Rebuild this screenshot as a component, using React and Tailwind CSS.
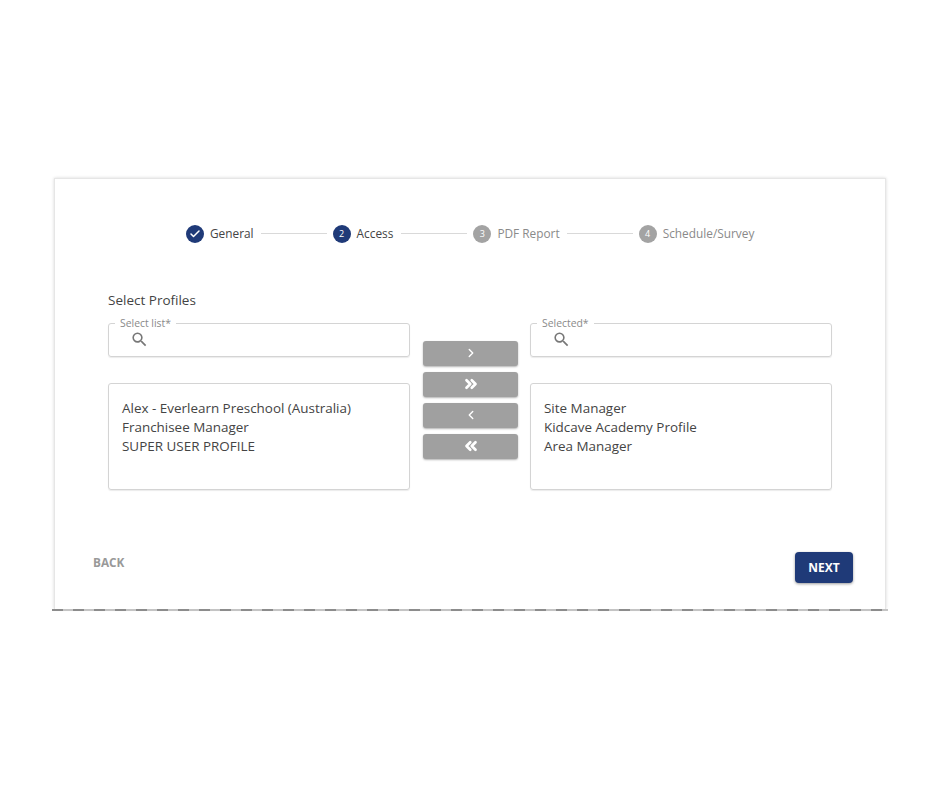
import React from "react";
import { Check, ChevronRight, ChevronLeft, ChevronsRight, ChevronsLeft } from "lucide-react";

const font = { fontFamily: '"Open Sans", sans-serif' };

function SearchIcon() {
  return (
    <svg width="19" height="19" viewBox="0 0 24 24" fill="#777777">
      <path d="M15.5 14h-.79l-.28-.27A6.47 6.47 0 0 0 16 9.5 6.5 6.5 0 1 0 9.5 16c1.61 0 3.09-.59 4.23-1.57l.27.28v.79l5 4.99L20.49 19l-4.99-5zm-6 0C7.01 14 5 11.99 5 9.5S7.01 5 9.5 5 14 7.01 14 9.5 11.99 14 9.5 14z" />
    </svg>
  );
}

function Step({ mark, label, active }) {
  return (
    <div className="flex items-center gap-[6px]">
      <div className={"w-[18px] h-[18px] rounded-full flex items-center justify-center text-white text-[9px] " + (active ? "bg-[#1f3a78]" : "bg-[#a3a3a3]")}>
        {mark}
      </div>
      <span className={"text-[11.85px] leading-[18px] -translate-y-px " + (active ? "text-[#444444]" : "text-[#8a8a8a]")}>{label}</span>
    </div>
  );
}

function Line({ wide }) {
  return <div className={"w-[66px] h-px bg-[#d9d9d9] -translate-y-px " + (wide ? "ml-[2px]" : "ml-[1px]")} />;
}

function Column({ label, items }) {
  return (
    <div className="w-[302px]">
      <div className="relative h-[34px] border border-[#d4d4d4] rounded-[3px] shadow-[0_1px_1px_rgba(0,0,0,0.08)] pl-[21px] pt-[6px]">
        <span className="absolute -top-[8px] left-[6px] bg-white px-[5px] text-[10.4px] leading-[14px] text-[#8a8a8a]">{label}</span>
        <SearchIcon />
      </div>
      <div className="mt-[26px] h-[107px] border border-[#d4d4d4] rounded-[3px] shadow-[0_1px_1px_rgba(0,0,0,0.08)] pl-[13px] pt-[15px] text-[13.45px] leading-[19px] text-[#444444]">
        {items.map((t) => (
          <div key={t}>{t}</div>
        ))}
      </div>
    </div>
  );
}

function MoveButton({ children }) {
  return (
    <div className="w-[95px] h-[25px] pb-[1px] rounded-[3px] bg-[#a0a0a0] text-white flex items-center justify-center shadow-[0_1px_2px_rgba(0,0,0,0.3)]">
      {children}
    </div>
  );
}

export default function App() {
  return (
    <div style={font} className="w-[940px] h-[788px] bg-white pt-[178px] pl-[52px]">
      <div className="w-[836px]">
        <div className="mx-[2px] h-[431px] bg-white border-t border-x border-[#e6e6e6] shadow-[0_0_3px_rgba(0,0,0,0.16)] flex flex-col">
          <div className="flex items-center mt-[46px] pl-[131px] gap-[6px] h-[18px]">
            <Step active label="General" mark={<Check size={12} strokeWidth={3} />} />
            <Line />
            <Step active label="Access" mark="2" />
            <Line wide />
            <Step label="PDF Report" mark="3" />
            <Line />
            <Step label="Schedule/Survey" mark="4" />
          </div>

          <div className="mt-[47px] ml-[53px] text-[13.5px] leading-[20px] text-[#444444]">Select Profiles</div>

          <div className="mt-[13px] ml-[53px] flex">
            <Column label="Select list*" items={["Alex - Everlearn Preschool (Australia)", "Franchisee Manager", "SUPER USER PROFILE"]} />
            <div className="ml-[13px] mr-[12px] mt-[18px] flex flex-col gap-[6px]">
              <MoveButton><ChevronRight size={14} strokeWidth={2.4} /></MoveButton>
              <MoveButton><ChevronsRight size={18} strokeWidth={3.6} /></MoveButton>
              <MoveButton><ChevronLeft size={14} strokeWidth={2.4} /></MoveButton>
              <MoveButton><ChevronsLeft size={18} strokeWidth={3.6} /></MoveButton>
            </div>
            <Column label="Selected*" items={["Site Manager", "Kidcave Academy Profile", "Area Manager"]} />
          </div>

          <div className="mt-[62px] flex items-start justify-between pl-[38px] pr-[32px]">
            <span className="mt-[1px] text-[11.8px] leading-[18px] font-bold text-[#999999]">BACK</span>
            <div className="w-[58px] h-[31px] rounded-[4px] bg-[#1f3a78] text-white text-[12px] font-bold flex items-center justify-center shadow-[0_1px_3px_rgba(0,0,0,0.4)]">
              NEXT
            </div>
          </div>
        </div>
        <div className="h-[2px] bg-[repeating-linear-gradient(90deg,#8c8c8c_0,#8c8c8c_11px,#c4c4c4_11px,#c4c4c4_21px)]" />
      </div>
    </div>
  );
}
